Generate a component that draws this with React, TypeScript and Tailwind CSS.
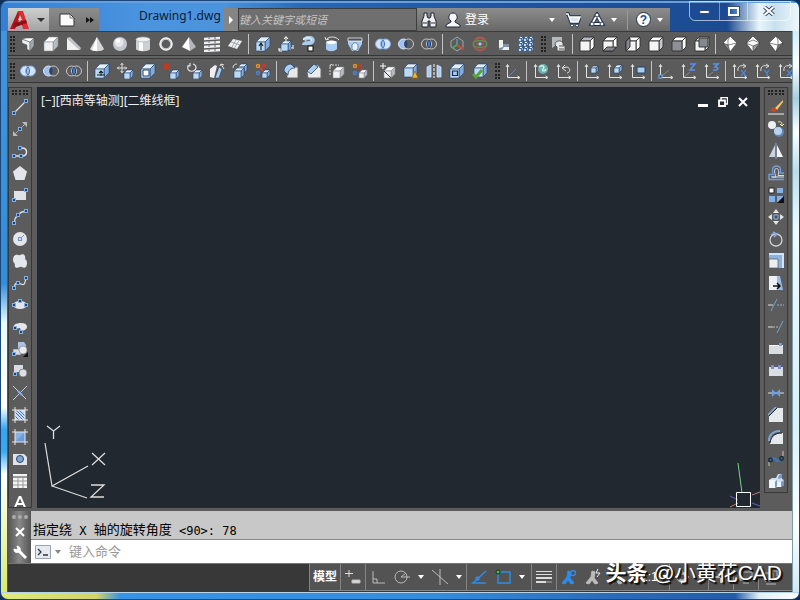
import { useState } from 'react';
import type { ReactNode } from 'react';

const W = '#eef0f2';
const G = '#a4a8ad';
const B = '#a9cdf0';
const M = '#6f9bd0';
const D = '#23446e';

// Small cube used by most of the solid editing icons
function Cube({ x, y, s, blue }: { x: number; y: number; s: number; blue?: boolean }) {
  const k = Math.round(s / 3);
  return (
    <g stroke={blue ? D : '#8b8f94'} strokeWidth=".6" strokeLinejoin="round">
      <path d={`M${x} ${y + k}l${k} ${-k}h${s - k}l${-k} ${k}z`} fill={blue ? '#e3f0fc' : '#fff'} />
      <path d={`M${x + s - k} ${y + k}l${k} ${-k}v${s - k}l${-k} ${k}z`} fill={blue ? '#83aadb' : '#b7babe'} />
      <path d={`M${x} ${y + k}h${s - k}v${s - k}h${k - s}z`} fill={blue ? '#bcdaf6' : W} />
    </g>
  );
}

function ViewCube({ face }: { face: string }) {
  const dark = '#85898f';
  return (
    <g stroke="#2c2c2c" strokeWidth=".9" strokeLinejoin="round">
      <path d="M1 5l4-4h10l-4 4z" fill={face === 'top' ? '#b5b8bd' : '#fff'} />
      <path d="M11 5l4-4v10l-4 4z" fill={face === 'right' ? '#c5c8cd' : '#fff'} />
      <path d="M1 5h10v10H1z" fill={face === 'front' ? '#8d9196' : '#f4f4f4'} />
      {face === 'bottom' && <path d="M1 15l4-4h9l-3 4z" fill={dark} />}
      {face === 'left' && <path d="M1 5l4-3v9l-4 4z" fill={dark} />}
      {face === 'back' && <path d="M5 2h9v9H5z" fill={dark} />}
    </g>
  );
}

function Axes({ children }: { children?: ReactNode }) {
  return (
    <g>
      <path d="M2.500 2v12.500H14M1 4l1.500-2.500L4 4M12.500 13l2.500 1.500-2.500 1.500" fill="none" stroke="#e2e2e2" />
      {children}
    </g>
  );
}

function Node({ x, y }: { x: number; y: number }) {
  return <rect x={x - 1.5} y={y - 1.5} width="3" height="3" fill={D} stroke="#7fb0ee" strokeWidth="1" />;
}

const icons: Record<string, ReactNode> = {
  polysolid: <g stroke="#555" strokeWidth=".5"><path d="M2 3l8 3v9l-3-2V9L2 7z" fill={W} /><path d="M10 6l4-4v8l-4 5z" fill={G} /><path d="M2 3l4-1 8 0-4 4z" fill="#fff" /></g>,
  box: <Cube x={1} y={1} s={14} />,
  wedge: <g><path d="M1 2v12h13z" fill={W} /><path d="M1 2l3-1 11 11-1 2z" fill="#c1c4c8" /></g>,
  cone: <g><path d="M8 1l7 12c-2 3-12 3-14 0z" fill="#d4d6d9" /><path d="M8 1L3 14c2 1 4 1 5 1z" fill="#fff" /></g>,
  sphere: <g><circle cx="8" cy="8" r="7" fill="#c4c8cd" /><circle cx="7" cy="6.500" r="4.500" fill="#e4e7ea" /><circle cx="6" cy="5" r="2" fill="#fff" /></g>,
  cylinder: <g><path d="M1 3v10c1 3 13 3 14 0V3z" fill="#cdd0d3" /><path d="M4 4v10l4 1V4z" fill="#fff" /><ellipse cx="8" cy="3.500" rx="7" ry="2.500" fill={W} stroke={G} strokeWidth=".7" /></g>,
  torus: <g fill="none"><circle cx="8" cy="8" r="5.500" stroke="#c9ccd0" strokeWidth="2.500" /><circle cx="8" cy="8" r="6" stroke="#fff" strokeWidth="1" /></g>,
  pyramid: <g><path d="M8 1l7 10-6 4z" fill="#b3b6ba" /><path d="M8 1L1 11l8 4z" fill="#fff" /></g>,
  helix: <g><path d="M0 3l16-1M0 7l16-1M0 11l16-1M0 15l16-1" stroke={W} strokeWidth="2.500" /><path d="M5 1v14M11 1v14" stroke="#8e9296" strokeWidth="1.500" strokeDasharray="2 2" /></g>,
  plane: <g><path d="M6 3l9 2-5 8-9-3z" fill={W} /><path d="M9 4L5 11M12 4.500L7.500 12M4 6l9 3" stroke="#8b8f94" strokeWidth=".7" /></g>,
  presspull: <g><Cube x={1} y={1} s={14} blue /><path d="M6 14V8M4 10l2-3 2 3" fill="none" stroke="#122" strokeWidth="1.100" /></g>,
  extrude: <g><path d="M1 13l4-2h10l-3 3H1z" fill="#d8d8d8" /><Cube x={3} y={5} s={10} blue /><path d="M8 6V1M6 3l2-2.500L10 3M1 12v3h3M15 9v4" fill="none" stroke="#fff" /></g>,
  sweep: <g><path d="M3 4c4-4 11-2 8 2-2 2-8 0-8 3" fill="none" stroke={B} strokeWidth="4" /><path d="M2 4c4-4 10-2 8 1" fill="none" stroke="#fff" /><rect x="7" y="10" width="5" height="5" fill="#fff" stroke="#111" /></g>,
  revolve: <g><path d="M2 6h11v7c-3 3-9 3-11 0z" fill={B} /><path d="M2 6c3-2 8-2 11 0-3 3-8 3-11 0z" fill="#fff" /><path d="M2 4C4 0 12 0 15 4M1 1l1 3 3-1" fill="none" stroke="#ddd" /></g>,
  loft: <g><path d="M1 2h14v6l-4 7H5L1 8z" fill={B} /><path d="M1 2h14v3H1z" fill="#4d545c" stroke="#fff" strokeWidth=".7" /><path d="M5 9c1-3 5-3 6 0v4c-2 2-4 2-6 0z" fill="#e8f1fa" stroke={D} strokeWidth=".6" /></g>,
  union: <g fill="#d2e4fa" stroke="#86aee5"><circle cx="5.500" cy="8" r="5" /><circle cx="10.500" cy="8" r="5" /><path d="M8 4c2 2 2 6 0 8-2-2-2-6 0-8z" fill="#a9c8f0" stroke="#3f6eb4" /></g>,
  subtract: <g fill="none"><circle cx="5.500" cy="8" r="5" fill="#9cc1f2" stroke="#d9e8fa" /><circle cx="10.500" cy="8" r="5" fill="#5a5c60" stroke="#c9c9c9" /><path d="M8 4c2 2 2 6 0 8-2-2-2-6 0-8z" fill="#23457a" /></g>,
  intersect: <g fill="none" stroke="#c4c8ce"><circle cx="5.500" cy="8" r="5" /><circle cx="10.500" cy="8" r="5" /><path d="M8 4c2 2 2 6 0 8-2-2-2-6 0-8z" fill="#4b83d2" stroke="#1c3e72" /></g>,
  move3d: <g fill="none"><path d="M8 1l6 4v6l-6 4-6-4V5z" stroke="#9aa" /><path d="M8 9V3" stroke="#5ab" strokeWidth="1.300" /><path d="M8 9l-5 3" stroke="#4caf50" strokeWidth="1.500" /><path d="M8 9l5 3M12 13h2v-2" stroke="#d04a3a" strokeWidth="1.500" /></g>,
  rotate3d: <g fill="none" strokeWidth="1.300"><circle cx="8" cy="8" r="6.500" stroke="#c4574d" /><ellipse cx="8" cy="8" rx="7" ry="3.500" stroke="#4f9a55" /><ellipse cx="8" cy="8" rx="3" ry="7" stroke="#c4574d" strokeWidth=".8" /><path d="M8 6l2 2-2 2-2-2z" fill={B} /></g>,
  align3d: <g><path d="M4 4h4v4h6v6H4z" fill={W} /><path d="M8 8h6v3H9l-2 3H4v-2l4-1z" fill="#8090a6" /></g>,
  array3d: <g>{[0, 5, 10].map((y) => [0, 5, 10].map((x) => <Cube key={`${x}-${y}`} x={x + 0.5} y={y + 0.5} s={5} blue />))}</g>,
  views: <g><path d="M1 12V1h10v4" fill="#b5b8bb" /><path d="M4 9c0-6 9-5 8 0l2 1v5H6v-4z" fill="#e7e7e7" stroke="#505256" /><path d="M8 10h5M8 13h5" stroke="#555" /></g>,
  iso1: <g stroke="#333" strokeWidth=".6"><path d="M8 0l7 7-7 9-7-9z" fill="#fff" /><path d="M1 7l5 2 2 7z" fill="#8b8f95" /><path d="M8 0L6 4v5l9-2" fill="none" /></g>,
  iso2: <g stroke="#333" strokeWidth=".6"><path d="M8 0l7 7-7 9-7-9z" fill="#fff" /><path d="M8 10l7-3-7 9z" fill="#999da2" /><path d="M1 7l7 3M1 7l7-3 7 3" fill="none" /></g>,
  iso3: <g stroke="#333" strokeWidth=".6"><path d="M8 0l7 7-7 9-7-9z" fill="#fff" /><path d="M10 9l5-2-7 9z" fill="#777b80" /><path d="M8 0l2 4v5L1 7" fill="none" /></g>,
  faceExtrude: <g><Cube x={1} y={1} s={14} blue /><path d="M7 13V8M5 10l2-2 2 2M3 12h8" fill="none" stroke="#122" strokeWidth="1.100" /></g>,
  faceMove: <g><path d="M5 0v10M0 5h10M3.500 2L5 .5 6.500 2M3.500 8L5 9.500 6.500 8M2 3.500L.5 5 2 6.500M8 3.500L9.500 5 8 6.500" fill="none" stroke="#ddd" /><Cube x={7} y={7} s={9} blue /></g>,
  faceOffset: <g><Cube x={1} y={1} s={14} blue /><path d="M3 7h6v6H3z" fill="#fff" stroke={D} /></g>,
  faceDelete: <g><path d="M1 1l5 5M6 1L1 6" stroke="#c8371f" strokeWidth="2.500" /><Cube x={7} y={7} s={9} blue /></g>,
  faceRotate: <g><path d="M3 2C0 6 3 9 7 8s4-6 0-7M4 0v3h-3" fill="none" stroke="#ddd" strokeWidth="1.200" /><Cube x={7} y={7} s={9} blue /></g>,
  faceTaper: <g><path d="M1 14V6l5-4 2 1-3 12z" fill={W} /><path d="M6 15l4-11 3 2-3 9z" fill={B} stroke={D} strokeWidth=".6" /><path d="M15 6l-3-5M11 3l1-2 3 1" fill="none" stroke="#ddd" /></g>,
  faceCopy: <g><Cube x={6} y={1} s={9} blue /><Cube x={2} y={5} s={10} blue /><path d="M1 5c0-3 2-4 4-4" fill="none" stroke="#ddd" /></g>,
  faceColor: <g fill="none" strokeWidth="1.500"><circle cx="3" cy="3" r="1.500" stroke="#e0902a" /><circle cx="9" cy="3" r="1.500" stroke="#c33a2c" /><circle cx="3" cy="10" r="1.500" stroke="#4c7fd2" /><path d="M5 5l3 3" stroke="#d44" /><Cube x={7} y={7} s={8} blue /></g>,
  fillet: <g><path d="M4 15V8c0-3 2-4 4-4h7v11z" fill="#e6e8ea" stroke="#666" /><path d="M1 8c0-4 3-7 7-7l4 4c-4 0-7 2-7 7z" fill={B} stroke={D} strokeWidth=".8" /></g>,
  chamfer: <g><path d="M2 15l-1-6 6-7h5l3 4v9z" fill="#e9ebed" stroke="#666" /><path d="M1 8l7-7 4 3-7 7z" fill={B} stroke={D} strokeWidth=".8" /></g>,
  edgeCopy: <g><Cube x={4} y={4} s={11} /><path d="M1 12V2h9M1 4l1-3 2 2" fill="none" stroke="#d5d5d5" strokeDasharray="2 1" /></g>,
  edgeColor: <g fill="none" strokeWidth="1.500"><circle cx="3" cy="3" r="1.500" stroke="#e0902a" /><path d="M6 5l4-4M6 2l4 4" stroke="#c33a2c" /><circle cx="3" cy="10" r="1.500" stroke="#4c7fd2" /><Cube x={7} y={7} s={8} /></g>,
  imprint: <g><Cube x={4} y={4} s={11} /><path d="M3 0v6M0 3h6" stroke="#fff" /><path d="M4 8l7 7" stroke="#333" /></g>,
  clean: <g><Cube x={1} y={1} s={13} blue /><path d="M12 8l3 7H9z" fill="#f0b730" stroke="#95621a" strokeWidth=".7" /></g>,
  separate: <g><path d="M1 4l4-2v12H1zM15 4l-4-2v12h4z" fill={B} stroke="#e5eefa" strokeWidth=".7" /><path d="M8 1v14" stroke="#fff" strokeDasharray="3 1" /></g>,
  shell: <g><Cube x={1} y={1} s={14} blue /><path d="M3.500 8h5v4.500h-5z" fill={B} stroke="#142b4a" strokeWidth="1.200" /></g>,
  check: <g><Cube x={2} y={1} s={13} blue /><path d="M1 11l3 3 6-7" fill="none" stroke="#56a636" strokeWidth="3" /></g>,
  ucs: <Axes><path d="M3 14l8-8" stroke="#6785ae" /></Axes>,
  ucsWorld: <Axes><circle cx="10" cy="6" r="5" fill="#6bb0b2" /><path d="M6 4c4-3 6 0 4 2s2 3 3 0" fill="none" stroke="#d7f0dd" strokeWidth="1.500" /></Axes>,
  ucsPrev: <Axes><path d="M6 5l5-1c4 1 3 6 0 6M9 2L6 5l4 3" fill="none" stroke="#ddd" /></Axes>,
  ucsFace: <Axes><Cube x={7} y={3} s={7} blue /></Axes>,
  ucsObject: <Axes><Cube x={7} y={2} s={8} blue /></Axes>,
  ucsView: <Axes><path d="M7 4h8v6H7z" fill={B} stroke={D} /></Axes>,
  ucsOrigin: <Axes><path d="M3 14l8-7" stroke="#888" /><Node x={2.5} y={13.5} /></Axes>,
  ucsZ: <Axes><path d="M9 1h5L9 7h5" fill="none" stroke="#5b92e5" strokeWidth="1.500" /><path d="M3 14l6-5" stroke="#888" /></Axes>,
  ucs3: <Axes><path d="M9 1h5l-3 3c5 0 3 4-2 3" fill="none" stroke="#5b92e5" strokeWidth="1.500" /><path d="M3 14l6-5" stroke="#888" /></Axes>,
  ucsRX: <Axes><path d="M6 8c-1-5 3-6 7-5M11 1l3 2-3 2" fill="none" stroke="#ddd" /><path d="M9 7l5 6M14 7l-5 6" stroke="#4f86da" strokeWidth="1.300" /></Axes>,
  ucsRY: <Axes><path d="M6 8c-1-5 3-6 7-5M11 1l3 2-3 2" fill="none" stroke="#ddd" /><path d="M9 7l3 3 2-3M12 10v3" fill="none" stroke="#4f86da" strokeWidth="1.300" /></Axes>,
  line: <g><path d="M2 14L14 2" stroke="#ddd" strokeWidth="1.200" /><Node x={2} y={14} /><Node x={14} y={2} /></g>,
  xline: <g><path d="M2 14L14 2" stroke="#ccc" strokeDasharray="2 1" /><path d="M1 15v-5l5 5zM15 1v5l-5-5z" fill="#bbb" /><Node x={8} y={8} /></g>,
  pline: <g><path d="M2 13h8c6 0 6-8 0-8H7" fill="none" stroke="#e3e3e3" strokeWidth="1.500" /><Node x={2} y={13} /><Node x={9} y={13} /><Node x={8} y={5} /></g>,
  polygon: <path d="M8 1l7 5.500L12.500 15h-9L1 6.500z" fill="#e3e6ea" />,
  rect: <g><path d="M2 4h12v9H2z" fill="#dfe2e6" /><Node x={2} y={13} /><Node x={14} y={3} /></g>,
  arc: <g><path d="M2 14C3 7 7 3 14 2" fill="none" stroke="#ddd" strokeWidth="1.300" /><Node x={2} y={14} /><Node x={6} y={6} /><Node x={14} y={2} /></g>,
  circle: <g><circle cx="8" cy="8" r="7" fill="#e3e6ea" /><path d="M8 8l4-4" stroke="#6a93cc" /><rect x="6.500" y="6.500" width="3" height="3" fill="#cfe0f5" stroke="#6a93cc" /></g>,
  revcloud: <path d="M2 3c3-3 5 0 6-1 4-2 6 1 5 4 3 2 2 6 1 8-3 2-4-1-6 0-4 2-6 0-5-3-3-3-2-6-1-8z" fill="#e3e6ea" />,
  spline: <g><path d="M2 14c1-9 5-6 7-5s4 2 5-7" fill="none" stroke="#e0e0e0" strokeWidth="1.300" /><Node x={2} y={13} /><Node x={6} y={8} /><Node x={14} y={3} /></g>,
  ellipse: <g><ellipse cx="8" cy="8" rx="7" ry="4" fill="#e3e6ea" /><Node x={2} y={8} /><Node x={14} y={8} /><Node x={8} y={4} /></g>,
  ellipseArc: <g><path d="M2 10C0 5 6 4 9 4c8 0 8 7 0 8L8 9z" fill="#e3e6ea" /><Node x={3} y={9} /><Node x={9} y={13} /></g>,
  insert: <g><path d="M6 1h6l2 3v7H6z" fill="#a9c4e6" /><path d="M1 8h8v6H1z" fill="#d8dbdf" stroke="#666" strokeWidth=".6" /><circle cx="11" cy="9" r="4" fill="#e9ebee" stroke="#777" strokeWidth=".6" /><path d="M16 11v5h-5z" fill="#111" /><Node x={2} y={13} /></g>,
  block: <g><path d="M2 2h9v7H2z" fill="#d8dbdf" /><circle cx="11" cy="10" r="4" fill="#dde0e4" stroke="#666" strokeWidth=".7" /><Node x={3} y={11} /></g>,
  point: <g><path d="M1 1l6 6 7 7M1 15l6-6 8-8" fill="none" stroke="#c9ccd0" /><path d="M6 6l4 4" stroke="#7fb0ee" strokeWidth="2" /></g>,
  hatch: <g><path d="M3 3h10v10H3z" fill="#c9dcf3" /><path d="M4 3l9 9M7 3l6 6M3 5l8 8M3 9l4 4" stroke="#4a72a8" /><path d="M3 0v16M13 0v16M0 3h16M0 13h16" stroke="#e8e8e8" /></g>,
  gradient: <g><path d="M3 3h10v10H3z" fill="#8bb2e4" /><path d="M3 13L13 3v10z" fill="#6b9cdb" /><path d="M3 0v16M13 0v16M0 3h16M0 13h16" stroke="#e8e8e8" /></g>,
  region: <g><path d="M1 3h11l3 3v8H1z" fill="#e0e3e7" /><circle cx="8" cy="8" r="3.500" fill="#82a6d4" stroke="#28466e" /></g>,
  table: <g><path d="M1 1h14v14H1z" fill="#f3f3f3" /><path d="M1 4h14" stroke="#999" strokeWidth="2" /><path d="M1 8h14M1 12h14M6 5v10M11 5v10" stroke="#999" /></g>,
  erase: <g><path d="M15 1L7 9l2 2 6-8z" fill="#f4c964" /><path d="M7 9L5 8l-3 4 5 1 2-2z" fill="#c84a25" /><path d="M0 15h16" stroke="#f0f0f0" /></g>,
  copy: <g><circle cx="4" cy="4" r="4" fill="#edf0f2" /><circle cx="11" cy="11" r="5" fill="#5e87bd" /><circle cx="10" cy="10" r="4" fill="#b8d2ee" /><path d="M10 1c4-1 4 1 4 4M12 3l2 2 2-2" fill="none" stroke="#eadf9c" /></g>,
  mirror: <g><path d="M7 2v12H1z" fill="#cdd4dc" /><path d="M9 2v12h6z" fill="#f5f6f7" /><path d="M8 0v16" stroke="#84a8d8" /></g>,
  offset: <g fill="none"><path d="M16 14.500H1v-5h4C4 5 4 1 8.500 1S13 5 12 8h4" stroke="#6f9fdc" strokeWidth="1.300" /><path d="M16 12H3.500M3.500 12H8C6 7 6 3.500 8.500 3.500S11 7 10 10.500h6" stroke="#cfdcec" /></g>,
  array: <g><path d="M1 1h5v5H1z" fill="#fff" stroke="#222" /><path d="M9 1h6v5H9zM1 9h6v6H1zM9 9h6v6H9z" fill="#85b0e6" /><path d="M16 9v7H9z" fill="#111" /></g>,
  move: <g fill="#e5e5e5"><path d="M8 0l3 4H5zM8 16l3-4H5zM0 8l4-3v6zM16 8l-4-3v6z" /><path d="M6 6h4v4H6z" fill="#3f5575" stroke="#8db1dd" /></g>,
  rotate: <g fill="none"><circle cx="8" cy="9" r="6" stroke="#ced2d6" strokeWidth="1.300" /><path d="M3 4c1-1 3-2 6-1M5 1l4 2-3 3" stroke="#86a9e0" strokeWidth="1.500" /></g>,
  scale: <g><path d="M1 1h14v14H1z" fill="#8eb2dd" /><path d="M1 1h14v14" fill="none" stroke="#d2e4f8" strokeWidth="2" /><path d="M1 6h9v9H1z" fill="#eceff2" stroke="#555" strokeWidth=".7" /></g>,
  stretch: <g><path d="M1 1h8v14H1z" fill="#eef1f3" /><path d="M9 1h3l3 14H9z" fill="#9abce8" /><path d="M5 11h6M9 8l3 3-3 3" fill="none" stroke="#111" strokeWidth="1.500" /></g>,
  trim: <g><path d="M0 8h5" stroke="#ddd" /><path d="M9 8h7" stroke="#8db1dd" strokeDasharray="2 1" /><path d="M3 14l6-12" stroke="#7aa0d2" /></g>,
  extend: <g><path d="M0 8h5" stroke="#ddd" /><path d="M5 8h6" stroke="#bbb" strokeDasharray="2 1" /><path d="M9 14l6-12" stroke="#7aa0d2" /></g>,
  breakPoint: <g><path d="M1 4h14v9H1z" fill="#dadde1" /><path d="M1 4.500h14" stroke="#f7f7f7" /><path d="M11 2h3v3h-3z" fill="#6e9ee0" /></g>,
  break2: <g><path d="M1 4h14v9H1z" fill="#dadde1" /><path d="M3 2h3v4H3zM10 2h3v4h-3z" fill="#7b8fd8" /></g>,
  join: <g><path d="M0 8h16" stroke="#ddd" /><path d="M4 4l4 4-4 4zM12 4L8 8l4 4z" fill="#6ea0e6" /></g>,
  chamferEdge: <g><path d="M1 15V9l8-8h6v14z" fill="#e6e9ec" /><path d="M0 8l8-8" stroke="#8bb2e2" strokeWidth="1.500" /><path d="M1 9l8-8" stroke="#222" /></g>,
  filletEdge: <g><path d="M2 15c0-7 4-11 13-11v11z" fill="#e6e9ec" /><path d="M1 12C1 6 5 2 12 2" fill="none" stroke="#7fa8dc" strokeWidth="2" /><path d="M2 14C3 8 6 4 14 4" fill="none" stroke="#222" /></g>,
  blend: <g><path d="M1 15v-4M15 5V0" fill="none" stroke="#d9c3a2" /><path d="M3 9c4-6 5 5 10-1" fill="none" stroke="#4576b0" strokeWidth="2.500" /><circle cx="2.500" cy="9" r="1.800" fill="none" stroke="#0e2740" strokeWidth="1.300" /><circle cx="13.500" cy="7.500" r="1.800" fill="none" stroke="#0e2740" strokeWidth="1.300" /></g>,
  explode: <g><path d="M1 7l3-2h4l2-4h4v5l2 1v5l-3 2H9l-2 1H1z" fill="#cfe0f1" /><path d="M7 15V9l2-2v6zM13 14V9l3-2v5zM10 6l4-1V1l-3 1z" fill={M} /><path d="M1 7h6v8H1zM9 9h4v5H9z" fill="#f1f6fa" /></g>,
  textA: <path d="M3 12.500L7.500 2h1L13 12.500M5 9h6" fill="none" stroke="#fff" strokeWidth="2" />,
};

for (const face of ['top', 'bottom', 'left', 'right', 'front', 'back']) {
  icons[`view-${face}`] = <ViewCube face={face} />;
}

const solidTools = [
  'polysolid box wedge cone sphere cylinder torus pyramid helix plane',
  'presspull extrude sweep revolve loft',
  'union subtract intersect',
  'move3d rotate3d align3d array3d',
];
const viewTools = ['views', 'view-top view-bottom view-left view-right view-front view-back', 'iso1 iso2 iso3'];
const editTools = [
  'union subtract intersect',
  'faceExtrude faceMove faceOffset faceDelete faceRotate faceTaper faceCopy faceColor',
  'fillet chamfer edgeCopy edgeColor',
  'imprint clean separate shell check',
];
const ucsTools = ['ucs', 'ucsWorld ucsPrev', 'ucsFace ucsObject ucsView', 'ucsOrigin ucsZ ucs3', 'ucsRX ucsRY ucsRX'];
const drawTools = 'line xline pline polygon rect arc circle revcloud spline ellipse ellipseArc insert block point hatch gradient region table textA';
const modifyTools = 'erase copy mirror offset array move rotate scale stretch trim extend breakPoint break2 join chamferEdge filletEdge blend explode';

function Tool({ name }: { name: string }) {
  return (
    <button type="button" aria-label={name} className="flex h-[22px] w-[23px] shrink-0 items-center justify-center hover:bg-white/15">
      <svg viewBox="0 0 16 16" className="size-4">{icons[name]}</svg>
    </button>
  );
}

function Toolbar({ groups }: { groups: string[] }) {
  return (
    <div className="flex shrink-0 items-center">
      <div className="flex w-2 justify-center gap-px">
        <i className="h-4 border-l-2 border-dotted border-[#222]" />
        <i className="h-4 border-l-2 border-dotted border-[#222]" />
      </div>
      {groups.map((group, i) => (
        <div key={i} className="flex shrink-0 items-center">
          {i > 0 && <i className="mx-0.5 h-5 w-px bg-[#c2c2c2]" />}
          {group.split(' ').map((name, j) => <Tool key={j} name={name} />)}
        </div>
      ))}
    </div>
  );
}

function ToolRow({ children }: { children: ReactNode }) {
  return <div className="flex h-[25px] gap-0.5 overflow-hidden border-y border-t-[#3c3c3c] border-b-[#353535] bg-[#5b5b5b]">{children}</div>;
}

function ToolColumn({ tools }: { tools: string }) {
  return (
    <div className="flex w-6 flex-col items-center overflow-hidden border border-[#383838] bg-[#5c5c5c]">
      <div className="flex h-2 shrink-0 flex-col justify-center gap-px">
        <i className="w-4 border-t-2 border-dotted border-[#222]" />
        <i className="w-4 border-t-2 border-dotted border-[#222]" />
      </div>
      {tools.split(' ').map((name) => <Tool key={name} name={name} />)}
    </div>
  );
}

function Caret() {
  return <i className="h-0 w-0 shrink-0 border-x-[3px] border-t-4 border-x-transparent border-t-white" />;
}

function TitleBar() {
  return (
    <header className="relative flex h-[30px] shrink-0 items-end border-t-2 border-[#6a9fdc] bg-[linear-gradient(90deg,#3480d4_0%,#4a94e0_18%,#4b93dd_28%,#2868b4_38%,#1f55a2_60%,#1b4a92_91%,#e8f5fb_95%,#c8e0ee_97%,#edf7fb_100%)] pl-[7px]">
      <button type="button" aria-label="应用程序" className="flex h-[23px] w-[41px] items-center justify-between bg-linear-to-b from-[#d0d0d0] to-[#a3a3a3] pr-1">
        <svg viewBox="0 0 24 22" className="h-[22px] w-6">
          <path d="M2 20L10 2h5L7 20z" fill="#b3161e" />
          <path d="M10 2h5l6 18h-6z" fill="#da2d34" />
          <path d="M6 14l12-3 1 3-14 5z" fill="#8c1016" />
          <path d="M10 11l2-5 2 5z" fill="#d3cdcd" />
        </svg>
        <i className="border-x-4 border-t-4 border-x-transparent border-t-[#333]" />
      </button>
      <div className="flex h-[23px] w-[50px] items-center justify-around bg-linear-to-b from-[#8c8c8c] to-[#747474] pl-1">
        <button type="button" aria-label="新建">
          <svg viewBox="0 0 16 14" className="h-[14px] w-4"><path d="M1 1h10l4 4v8H1z" fill="#fafafa" stroke="#333" /><path d="M11 1v4h4" fill="none" stroke="#777" /></svg>
        </button>
        <button type="button" aria-label="更多">
          <svg viewBox="0 0 8 6" className="h-[6px] w-2"><path d="M0 0l4 3-4 3zM4 0l4 3-4 3z" fill="#111" /></svg>
        </button>
      </div>
      <h1 className="flex h-7 flex-none items-center pb-0.5 pl-10 font-['Noto_Sans'] text-xs whitespace-nowrap text-[#0b1c38]">Drawing1.dwg</h1>
      <button type="button" aria-label="展开" className="ml-auto flex h-[23px] w-[15px] shrink-0 items-center justify-center bg-[#858585]">
        <i className="border-y-4 border-l-4 border-y-transparent border-l-white" />
      </button>
      <input aria-label="搜索" placeholder="键入关键字或短语" className="h-[23px] w-[179px] border border-[#3e3e3e] bg-[#6f6f6f] text-[11px] text-white italic placeholder:text-[#c4c4c4]" />
      <div className="mr-[129px] flex h-[23px] w-[253px] shrink-0 items-center bg-linear-to-b from-[#8c8c8c] to-[#686868] pl-1 text-white">
        <button type="button" aria-label="查找">
          <svg viewBox="0 0 16 16" className="size-4"><path d="M3 1h3v3l1 2h2l1-2V1h3v3l2 5v6H9V9H7v6H1V9l2-5z" fill="#eee" stroke="#1c2430" /><path d="M2 11h4M10 11h4" stroke="#333" /></svg>
        </button>
        <button type="button" className="ml-2 flex items-center gap-1 text-xs">
          <svg viewBox="0 0 16 16" className="size-4"><path d="M6 9C2 6 4 1 8 1s6 5 2 8v1l5 3v2H1v-2l5-3z" fill="#f7f7f7" stroke="#1e2940" /></svg>
          登录
        </button>
        <span className="ml-[60px] flex"><Caret /></span>
        <button type="button" aria-label="购物车" className="ml-2.5">
          <svg viewBox="0 0 16 16" className="size-4"><path d="M1 2h2l3 8h7l2-5H4.500" fill="none" stroke="#1f2f4c" strokeWidth="3.500" /><path d="M4.500 5H15l-2 5H6z" fill="#dfe5ee" /><path d="M1 2h2l3 8h7l2-5H4.500" fill="none" stroke="#fff" strokeWidth="1.500" /><circle cx="7" cy="13.500" r="1.500" fill="#fff" stroke="#1f2f4c" /><circle cx="12" cy="13.500" r="1.500" fill="#fff" stroke="#1f2f4c" /></svg>
        </button>
        <button type="button" aria-label="连接" className="mr-1 ml-2 flex items-center gap-1.5">
          <svg viewBox="0 0 16 16" className="size-4" fill="none"><path d="M8 3l5 9H3z" stroke="#1f2f4c" strokeWidth="4" /><path d="M8 3l5 9H3z" stroke="#fff" strokeWidth="2" /><g fill="#fff" stroke="#1f2f4c"><circle cx="8" cy="3" r="2" /><circle cx="3" cy="12" r="2" /><circle cx="13" cy="12" r="2" /></g></svg>
          <Caret />
        </button>
        <button type="button" aria-label="帮助" className="ml-1.5 flex h-5 items-center gap-1.5 border-l border-[#999] pl-2">
          <span className="flex size-[15px] items-center justify-center rounded-full border border-[#1f2f4c] bg-white font-['Liberation_Sans'] text-xs font-bold text-[#1d4a8e]">?</span>
          <Caret />
        </button>
      </div>
      <div className="absolute -top-0.5 right-2 flex h-5 rounded-b-md border border-white/60">
        <button type="button" aria-label="最小化" className="flex w-[30px] items-end justify-center border-r border-white/40 pb-1.5"><i className="h-1 w-[11px] rounded-xs border border-[#34506f] bg-white" /></button>
        <button type="button" aria-label="最大化" className="flex w-[28px] items-center justify-center border-r border-white/40"><i className="h-[9px] w-[11px] border-2 border-white outline outline-[#34506f]" /></button>
        <button type="button" aria-label="关闭" className="flex w-[42px] items-center justify-center">
          <svg viewBox="0 0 12 10" className="h-2.5 w-3"><path d="M1.500 1l9 8M10.500 1l-9 8" stroke="#3b5068" strokeWidth="4" /><path d="M1.500 1l9 8M10.500 1l-9 8" stroke="#fff" strokeWidth="2" /></svg>
        </button>
      </div>
    </header>
  );
}

function Viewport() {
  return (
    <main className="relative flex min-w-0 flex-1 items-start justify-between overflow-hidden bg-[#212830] px-1 py-1.5 text-[#eee]">
      <p className="font-['Noto_Sans','Noto_Sans_CJK_SC',sans-serif] text-xs">[−][西南等轴测][二维线框]</p>
      <div className="mt-1 mr-2 flex items-center gap-2.5">
        <button type="button" aria-label="最小化视口"><svg viewBox="0 0 10 10" className="size-2.5"><path d="M0 7h10v3H0z" fill="#fff" /></svg></button>
        <button type="button" aria-label="还原视口"><svg viewBox="0 0 10 10" className="size-2.5" fill="none" stroke="#fff"><path d="M3 3V.5h6.500V7H7" strokeWidth="1.500" /><path d="M1 3.500h6V9H1z" strokeWidth="1.800" /></svg></button>
        <button type="button" aria-label="关闭视口"><svg viewBox="0 0 10 10" className="size-2.5"><path d="M1 1l8 8M9 1L1 9" stroke="#fff" strokeWidth="2" /></svg></button>
      </div>
      {/* UCS icon */}
      <svg viewBox="0 0 66 76" className="absolute bottom-2 left-1.5 h-[76px] w-[66px]" fill="none" stroke="#dcdcdc">
        <path d="M2 19l7 43 36-20M9 62l35 12" strokeWidth="1.200" />
        <path d="M4 2l6.500 5L17 2M10.500 7v8M49 29l13 12M62 29L49 41M48 61h13L48 73h13" strokeWidth="1.300" />
      </svg>
      {/* Cursor */}
      <svg viewBox="0 0 32 46" className="absolute right-0 bottom-0 h-[46px] w-8" fill="none">
        <path d="M10 1l4 30" stroke="#78d485" />
        <path d="M2 45l8-4M24 33l8-3" stroke="#c7776d" />
        <path d="M2 34l8 4M24 41l8 3" stroke="#6064be" />
        <path d="M8.500 30.500h14v14h-14z" stroke="#fff" />
      </svg>
    </main>
  );
}

function CommandLine() {
  const [command, setCommand] = useState('');
  return (
    <section className="flex h-[52px] shrink-0">
      <div className="flex w-[23px] flex-col items-center justify-between bg-linear-to-r from-[#555] via-[#888] to-[#555] py-1 text-white">
        <i className="w-4 border-t-4 border-dotted border-[#aaa]" />
        <button type="button" aria-label="关闭命令行"><svg viewBox="0 0 10 10" className="size-2.5"><path d="M1 1l8 8M9 1L1 9" stroke="#fff" strokeWidth="2" /></svg></button>
        <button type="button" aria-label="自定义"><svg viewBox="0 0 14 14" className="size-3.5"><path d="M5 5l8 8" stroke="#fff" strokeWidth="3" /><path d="M4 1l1 3-1 1-3-1c0 4 3 4 5 3s2-5-2-6z" fill="#fff" stroke="#fff" /></svg></button>
      </div>
      <div className="flex min-w-0 flex-1 flex-col">
        <p className="flex h-[29px] items-end border-b border-[#888] bg-[#c8c8c8] px-0.5 font-['DejaVu_Sans_Mono','Noto_Sans_CJK_SC',monospace] text-[13px] whitespace-pre text-black">
          指定绕<span className="text-xs"> X </span>轴的旋转角度<span className="text-xs"> &lt;90&gt;: 78</span>
        </p>
        <label className="flex flex-1 items-center gap-1 bg-white px-1">
          <svg viewBox="0 0 16 14" className="h-3.5 w-4"><path d="M.5.5h15v13H.5z" fill="#e5eaf1" stroke="#98a4b4" /><path d="M3 4l3 3-3 3M8 10h5" fill="none" stroke="#333" strokeWidth="1.300" /></svg>
          <i className="border-x-[3px] border-t-4 border-x-transparent border-t-[#888]" />
          <input
            aria-label="命令"
            value={command}
            onChange={(e) => setCommand(e.target.value)}
            placeholder="键入命令"
            className="ml-1 min-w-0 flex-1 text-[13px] text-black outline-none placeholder:text-[#999]"
          />
        </label>
      </div>
    </section>
  );
}

function StatusItem({ label, caret, blue, children }: { label: string; caret?: boolean; blue?: boolean; children: ReactNode }) {
  return (
    <button type="button" aria-label={label} className="flex h-full shrink-0 items-center gap-2 px-1">
      <svg viewBox="0 0 16 16" className="size-4" fill="none" stroke={blue ? '#2d8ceb' : '#bcbcbc'}>{children}</svg>
      {caret && <Caret />}
    </button>
  );
}

function Divider() {
  return <i className="h-full w-px shrink-0 bg-[#858585]" />;
}

function StatusBar() {
  const person = <path d="M7 2l3 1-1 6 4 5-3 1-3-4-3 4-3-1 5-6z" />;
  return (
    <footer className="flex h-[29px] shrink-0 justify-end border-t border-[#777] bg-[#383838] pb-px">
      <div className="flex w-[483px] items-center overflow-hidden border-b border-l border-[#858585] bg-[#535353] text-white">
        <button type="button" className="w-[30px] shrink-0 text-xs font-bold">模型</button>
        <Divider />
        <StatusItem label="捕捉"><path d="M4 1v7M0 4.500h8" stroke="#ddd" /><path d="M7 11h8v3H7z" fill="#ddd" /></StatusItem>
        <Divider />
        <StatusItem label="正交"><path d="M3 2v12h12M3 10h4v4" /></StatusItem>
        <StatusItem label="极轴" caret><circle cx="7" cy="8" r="6" /><path d="M7 8h9M7 8l5-4" /></StatusItem>
        <StatusItem label="等轴测" caret><path d="M8 0v16M0 1l16 14" /></StatusItem>
        <Divider />
        <StatusItem label="对象追踪" blue><path d="M15 2L2 14h13" strokeWidth="1.500" /><path d="M5 8h3v3H5z" fill="#2d8ceb" /></StatusItem>
        <StatusItem label="对象捕捉" caret blue><path d="M3 3h12v11H3z" strokeWidth="1.500" /><circle cx="3" cy="3" r="2" fill="#41c04a" stroke="#103a12" /></StatusItem>
        <div className="w-0.5" />
        <Divider />
        <StatusItem label="线宽"><path d="M0 2.500h16M0 5.500h16" stroke="#ddd" /><path d="M0 9h16M0 13h10" strokeWidth="2" stroke="#ddd" /><path d="M10 13h6" stroke="#aaa" /></StatusItem>
        <Divider />
        <StatusItem label="注释可见性" blue><g fill="#2d8ceb">{person}</g><circle cx="12" cy="4" r="2.500" strokeWidth="1.300" /></StatusItem>
        <StatusItem label="自动缩放"><g fill="#bbb">{person}</g><path d="M13 0l-2 4h4l-3 4" stroke="#eee" /></StatusItem>
        <StatusItem label="注释比例"><g fill="#bbb">{person}</g></StatusItem>
        <button type="button" className="flex w-10 shrink-0 items-center gap-1 pl-3 text-xs">1:1<Caret /></button>
        <Divider />
        <StatusItem label="工作空间" caret><circle cx="8" cy="8" r="4" strokeWidth="3" /><path d="M8 1v3M8 12v3M1 8h3M12 8h3" strokeWidth="2" /></StatusItem>
        <Divider />
        <StatusItem label="监视器"><path d="M8 2v12M2 8h12" strokeWidth="2" /></StatusItem>
        <Divider />
        <StatusItem label="隔离对象"><path d="M2 3h12v8H2zM5 14h6" /></StatusItem>
        <Divider />
        <StatusItem label="全屏显示"><path d="M2 4h8v8H2zM9 2h5v5M3 15h10" /></StatusItem>
      </div>
    </footer>
  );
}

export default function App() {
  return (
    <div className="relative flex h-screen flex-col overflow-hidden bg-[#10305a] font-['Liberation_Sans','Noto_Sans_CJK_SC',sans-serif]">
      <div className="flex min-h-0 flex-1 flex-col overflow-hidden rounded-lg border border-[#1c4779]">
        <TitleBar />
        <div className="flex min-h-0 flex-1">
          <div className="w-[7px] shrink-0 border-r border-[#345b83] bg-[linear-gradient(180deg,#4294df_0%,#348dd8_45%,#e9faff_52%,#fff_67%,#35a5ed_71%,#39aaf0_75%,#fff_79%,#f1f7c0_88%,#d9ea70_100%)]" />
          <div className="flex min-w-0 flex-1 flex-col bg-[#636363]">
            <div className="flex shrink-0 flex-col gap-0.5 pb-1">
              <ToolRow><Toolbar groups={solidTools} /><Toolbar groups={viewTools} /></ToolRow>
              <ToolRow><Toolbar groups={editTools} /><Toolbar groups={ucsTools} /></ToolRow>
            </div>
            <div className="flex min-h-0 flex-1 bg-[#5c5c5c] pb-[3px]">
              <div className="flex w-[29px] shrink-0"><ToolColumn tools={drawTools} /></div>
              <Viewport />
              <div className="flex w-8 shrink-0 items-start pl-1"><ToolColumn tools={modifyTools} /></div>
            </div>
            <CommandLine />
            <StatusBar />
          </div>
          <div className="w-[7px] shrink-0 border-l border-[#7b9ba6] bg-[linear-gradient(180deg,#d4edf7_0%,#fff_6%,#a8cfdf_12%,#fff_18%,#bddce9_25%,#eefaff_35%,#d9f1f8_70%,#fff_88%,#d2e9f2_100%)]" />
        </div>
        <div className="h-[7px] shrink-0 border-t border-[#b7d4e8] bg-[linear-gradient(90deg,#dfeb7a_0%,#d2d36a_12%,#3793e6_15%,#348cdc_55%,#2b6dbb_75%,#235ba9_92%,#e1f0f6_95%,#fff_100%)]" />
      </div>
      <p className="pointer-events-none absolute right-[18px] bottom-3 text-[21px] whitespace-nowrap text-white [text-shadow:1px_1px_0_#111,2px_2px_1px_#111]">
        <b>头条</b> @小黄花CAD
      </p>
    </div>
  );
}
